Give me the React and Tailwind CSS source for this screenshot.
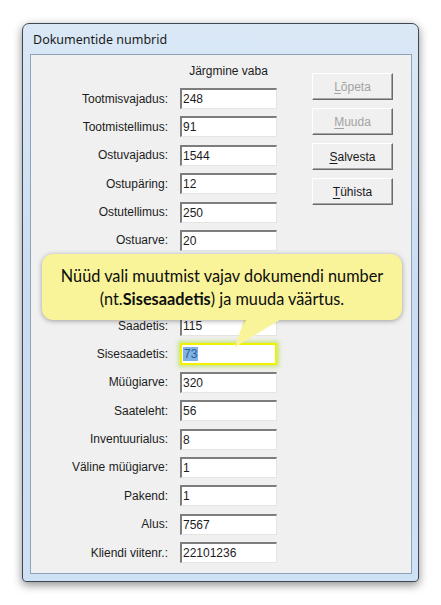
import React from 'react'

// rows 7 and 8 sit under the callout, so they carry no text
const rows = [
  ['Tootmisvajadus:', '248'],
  ['Tootmistellimus:', '91'],
  ['Ostuvajadus:', '1544'],
  ['Ostupäring:', '12'],
  ['Ostutellimus:', '250'],
  ['Ostuarve:', '20'],
  ['', ''],
  ['', ''],
  ['Saadetis:', '115'],
  ['Sisesaadetis:', '73', true],
  ['Müügiarve:', '320'],
  ['Saateleht:', '56'],
  ['Inventuurialus:', '8'],
  ['Väline müügiarve:', '1'],
  ['Pakend:', '1'],
  ['Alus:', '7567'],
  ['Kliendi viitenr.:', '22101236'],
]

function Field({ value, active }) {
  if (active) {
    return (
      <div className="w-[97px] h-[22px] border-2 border-[#f2f200] bg-white shadow-[0_0_4px_2px_rgba(190,225,110,0.8)] flex items-center pl-[1px]">
        <span className="bg-[#7fb3e4] text-[#2c5c96] leading-[14px] px-[1px]">{value}</span>
      </div>
    )
  }
  return (
    <div className="w-[97px] h-[21px] bg-white border-t-2 border-l-2 border-b border-r border-t-[#7d7d7d] border-l-[#7d7d7d] border-b-[#e4e4e4] border-r-[#e4e4e4] flex items-center pl-[1px]">
      {value}
    </div>
  )
}

function Btn({ letter, rest, disabled }) {
  return (
    <div
      className={`w-[81px] h-[27px] flex items-center justify-center bg-[#f0f0f0] border border-t-white border-l-white border-b-[#6a6a6a] border-r-[#6a6a6a] shadow-[inset_-1px_-1px_0_#a6a6a6] ${
        disabled ? 'text-[#a3a3a3]' : 'text-[#1a1a1a]'
      }`}
    >
      <span>
        <span className="underline underline-offset-2">{letter}</span>
        {rest}
      </span>
    </div>
  )
}

export default function App() {
  return (
    <div className="relative w-[441px] h-[605px] bg-white pt-[23px] pl-[22px] overflow-hidden">
      {/* dialog window */}
      <div className="w-[397px] h-[559px] rounded-t-[7px] rounded-b-[4px] border border-[#3f4752] bg-gradient-to-b from-[#dae8f6] via-[#c9dcf1] to-[#cfe1f4] shadow-[0_3px_10px_rgba(0,0,0,0.45)] flex flex-col pl-[7px] pr-[6px] pb-[7px]">
        <div
          className="h-[30px] flex items-center pl-[3px] pt-[2px] text-[12.5px] text-[#1b1b1b]"
          style={{ fontFamily: '"Noto Sans", "Open Sans", sans-serif' }}
        >
          Dokumentide numbrid
        </div>
        <div
          className="flex-1 border border-[#8fa3bb] bg-[#f0f0f0] flex text-[12px] text-[#1c1c1c]"
          style={{ fontFamily: '"Liberation Sans", Arial, sans-serif' }}
        >
          <div className="flex flex-col">
            <div className="h-[33px] flex pl-[149px] pt-[9px]">
              <div className="w-[97px] text-center leading-[14px]">Järgmine vaba</div>
            </div>
            <div className="flex flex-col gap-[7.375px]">
              {rows.map(([label, value, active], i) => (
                <div key={i} className="flex items-center h-[21px]">
                  <div className="w-[137px] text-right leading-[14px]">{label}</div>
                  <div className="ml-[12px]">
                    <Field value={value} active={active} />
                  </div>
                </div>
              ))}
            </div>
          </div>
          <div className="ml-[35px] pt-[18px] flex flex-col gap-[8px]">
            <Btn letter="L" rest="õpeta" disabled />
            <Btn letter="M" rest="uuda" disabled />
            <Btn letter="S" rest="alvesta" />
            <Btn letter="T" rest="ühista" />
          </div>
        </div>
      </div>

      {/* callout */}
      <div className="absolute left-[42px] top-[254px] w-[360px] h-[66px]">
        <svg className="absolute left-0 top-0 overflow-visible" width="360" height="100">
          <polygon points="204,60 242,60 193,93" fill="#f9f499" />
        </svg>
        <div
          className="absolute inset-0 rounded-[11px] bg-[#f9f499] shadow-[0_1px_5px_rgba(0,0,0,0.35)] flex flex-col items-center justify-center pb-[1px] text-[16.3px] leading-[23px] text-[#0d0d0d]"
          style={{ fontFamily: 'Lato, "Noto Sans", sans-serif' }}
        >
          <div>Nüüd vali muutmist vajav dokumendi number</div>
          <div>
            (nt.<span className="font-bold">Sisesaadetis</span>) ja muuda väärtus.
          </div>
        </div>
        <svg className="absolute left-0 top-0 overflow-visible" width="360" height="100">
          <polygon points="205,64 241,64 193,93" fill="#f9f499" />
        </svg>
      </div>
    </div>
  )
}
